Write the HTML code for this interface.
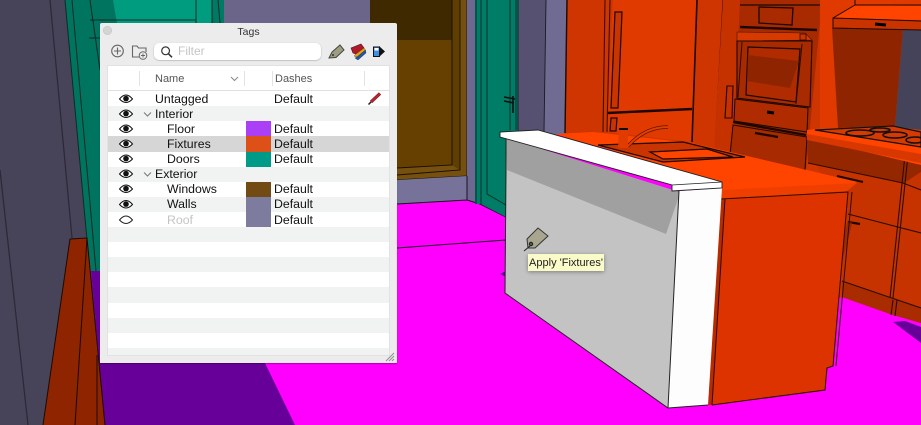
<!DOCTYPE html>
<html><head><meta charset="utf-8"><style>
html,body{margin:0;padding:0;background:#f0f}
#r{position:relative;width:921px;height:425px;overflow:hidden;filter:blur(.35px);font-family:"Liberation Sans",sans-serif}
#s{position:absolute;left:0;top:0}
#p{position:absolute;left:100px;top:23px;width:297px;height:340px;background:#ececec;box-shadow:0 1px 1px rgba(0,0,0,.3);border-radius:2px 2px 0 0}
.a{position:absolute}
#t{position:absolute;left:8px;top:43px;width:281px;height:289px;background:#f1f3f3;box-shadow:0 0 0 1px #e2e2e2}
.w{position:absolute;left:0;width:281px;height:15px;background:#fff}
.g{position:absolute;left:0;width:281px;height:15px;background:#f1f3f3}
.x{position:absolute;font-size:12.3px;line-height:15px;color:#111;white-space:nowrap;margin-top:1px}
.sw{position:absolute;left:138px;width:25px}
.sp{position:absolute;top:5px;width:1px;height:15px;background:#e3e3e3}
#tip{position:absolute;left:528px;top:254px;width:76px;height:17px;background:#fbfbc9;box-shadow:0 1px 4px rgba(0,0,0,.35);font-size:11px;line-height:18px;color:#222;text-align:center;white-space:nowrap}
</style></head><body><div id="r">
<svg id="s" width="921" height="425" viewBox="0 0 921 425">
<rect width="921" height="425" fill="#f0f"/>
<!-- left wall -->
<polygon points="0,0 66,0 105,425 0,425" fill="#474359"/>
<path d="M50 0L72 238M0 170L28 425" stroke="#2a2935" stroke-width="1.2" fill="none"/>
<!-- teal left -->
<polygon points="65,0 225,0 225,23 100,23 100,271 91,271 87,240" fill="#00745e"/>
<polygon points="100,0 212,0 212,23 117,23 113,0" fill="#009c80"/>
<polygon points="212,0 224,0 224,23 215,23" fill="#007a64"/>
<path d="M72 0L96 271M90 0L100 70M90 20H196M196 0V23M212 0V23M218 0L220 23M89 38H100M65 0L87 240" stroke="#0c2c28" stroke-width="1" fill="none"/>
<rect x="224" y="0" width="146" height="24" fill="#6a6589"/>
<rect x="370" y="0" width="30" height="24" fill="#3f2900"/>
<!-- purple shadow -->
<polygon points="91,271 300,271 265,363 295,425 105,425" fill="#660099"/>
<!-- red cabinet -->
<polygon points="70,239 87,238 105,425 43,425" fill="#8f2400"/>
<path d="M70 239L87 238L105 425M70 239L43 425M87 238L75 425M97 355V425" stroke="#1c0a00" stroke-width="1" fill="none"/>
<!-- brown door -->
<rect x="397" y="0" width="70" height="180" fill="#654000"/>
<rect x="397" y="0" width="55" height="40" fill="#3f2900"/>
<polygon points="452,0 467,0 467,176 397,180 397,168 452,165" fill="#76500f"/>
<polygon points="452,0 460,0 460,170 452,165" fill="#5f3e02"/>
<path d="M452 0V165L397 168M460 0V170L397 175M467 0V176L397 180" stroke="#1a1000" stroke-width=".9" fill="none"/>
<polygon points="397,180 467,176 467,200 397,204" fill="#76729a"/>
<polygon points="467,0 476,0 476,204 467,200" fill="#6d6890"/>
<path d="M397 204L467 200L480 204L506 217M397 248L506 240M467 176V200" stroke="#1a1220" stroke-width="1" fill="none"/>
<!-- teal door -->
<polygon points="475,0 519,0 519,140 506,140 506,217 481,204 475,204" fill="#007d67"/>
<path d="M476 0V204M481 0V204M487 0V194L506 205M510 0V130M516 0V130" stroke="#0b2d28" stroke-width="1" fill="none"/>
<path d="M504 97L515 99M504 101L514 103M513 96V113" stroke="#111" stroke-width="1.6" fill="none"/>
<polygon points="519,0 546,0 544,135 518,131" fill="#565170"/>
<polygon points="546,0 568,0 566,135 544,135" fill="#6f6b92"/>
<path d="M518 0V131M546 0L544 132" stroke="#1a1a22" stroke-width=".9" fill="none"/>
<!-- kitchen base -->
<polygon points="567,0 921,0 921,323 893,315 842,297 820,300 800,210 720,170 565,140" fill="#cf3500"/>
<polygon points="613,0 697,0 692,142 607,132" fill="#e03a00"/>
<path d="M567 0L565 133" stroke="#1c0800" stroke-width="1.400" fill="none"/>
<path d="M697 0L692 142" stroke="#1c0800" stroke-width="1.600" fill="none"/>
<path d="M607 113L692 109" stroke="#1c0800" stroke-width="2.400" fill="none"/>
<path d="M605 0L603 132M610 0L607 132M723 0L715 149" stroke="#3a1000" stroke-width="1.100" fill="none"/>
<polygon points="615,12 622,12 618,108 611,108" fill="#c93400" stroke="#1c0800" stroke-width="1.200"/>
<polygon points="611,118 617,118 616,131 610,131" fill="#c93400" stroke="#1c0800" stroke-width="1.200"/>
<!-- oven column -->
<polygon points="723,0 822,0 806,172 714,150" fill="#c53200"/>
<polygon points="740,0 822,0 806,168 733,150" fill="#a82a00"/>
<path d="M740 5H821" stroke="#1c0800" stroke-width="1.200"/>
<polygon points="759,7 793,8 792,25 759,23" fill="#a82a00" stroke="#1c0800" stroke-width="1.300"/>
<path d="M740 27L817 30" stroke="#1c0800" stroke-width="2.400"/>
<polygon points="737,32 805,33 812,40 737,41" fill="#d63a00" stroke="#4a1500" stroke-width=".6"/>
<rect x="800" y="34" width="6" height="6" fill="#c93400" stroke="#2b0c00" stroke-width=".8"/>
<polygon points="737,41 812,41 810,107 737,98" fill="#a82a00" stroke="#1c0800" stroke-width="1.100"/>
<polygon points="748,47 800,49 796,102 746,95" fill="#b02c00" stroke="#1c0800" stroke-width="1.200"/>
<polygon points="748,55 799,61 790,88 747,81" fill="#8f2500"/>
<path d="M742 42L738 97M802 44L796 104" stroke="#2b0c00" stroke-width="1" fill="none"/>
<polygon points="735,99 808,108 807,132 734,121" fill="#b02c00" stroke="#1c0800" stroke-width="1"/>
<path d="M767 112L774 113" stroke="#000" stroke-width="3"/>
<path d="M733 122L806 135" stroke="#1c0800" stroke-width="2.400"/>
<polygon points="733,125 807,137 805,170 730,155" fill="#a82a00" stroke="#1c0800" stroke-width="1"/>
<path d="M755 133L778 137" stroke="#1c0800" stroke-width="2.400"/>
<polygon points="727,86 733,86 732,118 725,118" fill="#c53200" stroke="#1c0800" stroke-width="1.100"/>
<!-- hood -->
<rect x="820" y="0" width="101" height="130" fill="#e03a00"/>
<polygon points="832,28 903,30 895,127 838,128" fill="#8f2500"/>
<polygon points="903,30 921,30 921,130 895,127" fill="#454359"/>
<polygon points="855,5 921,6 921,20 833,18" fill="#ff4400"/>
<polygon points="833,18 921,21 921,30 833,28" fill="#c83300"/>
<path d="M855 5L833 18V28L921 30M833 18L921 21M855 0V5H921" stroke="#1c0800" stroke-width="1" fill="none"/>
<path d="M875 24L886 25" stroke="#000" stroke-width="3"/>
<!-- lower cabinets -->
<polygon points="807,138 921,165 921,323 893,315 842,297 830,200" fill="#c73300"/>
<polygon points="807,137 921,150 921,172 904,183 808,163" fill="#952700"/>
<polygon points="842,281 893,299 921,308 921,323 893,315 842,297" fill="#a82c00"/>
<path d="M808 163L903 183L921 190M848 214L921 233M842 281L921 308M905 155L890 298M908 155L893 298M893 300L891 315M897 300L895 316" stroke="#2b0c00" stroke-width="1.100" fill="none"/>
<path d="M837 176L863 182" stroke="#1c0800" stroke-width="2"/>
<path d="M848 222L860 224" stroke="#1c0800" stroke-width="2.400"/>
<path d="M850 222L840 260" stroke="#8f2500" stroke-width="5" opacity=".7"/>
<!-- cooktop counter -->
<polygon points="807,130 815,129 893,126 921,132 921,165 807,138" fill="#ff4400"/>
<polygon points="807,134 921,154 921,163 807,140" fill="#d83800"/>
<polygon points="815,130 893,126 921,132 921,147" fill="#d63a00" stroke="#111" stroke-width="1.200"/>
<g fill="none" stroke="#111" stroke-width="1.600"><ellipse cx="860" cy="133" rx="14" ry="3"/><ellipse cx="880" cy="130" rx="10" ry="2"/><ellipse cx="895" cy="135" rx="12" ry="3"/><ellipse cx="915" cy="140" rx="9" ry="3"/></g>
<!-- floor shadow -->
<polygon points="893,322 905,321 921,327 921,343" fill="#660099"/>
<polygon points="500,274 506,271 506,277" fill="#660099"/>
<!-- countertop -->
<polygon points="555,134 593,132 692,143 807,170 857,182 847,191 721,199 722,182" fill="#ff4400"/>
<polygon points="721,190 857,183 847,191 721,199" fill="#ef3f00"/>
<polygon points="598,145 683,142 745,157 663,162" fill="#c93400" stroke="#1c0800" stroke-width="1.200"/>
<polygon points="650,152 707,149 733,157 663,159" fill="#ff4400" stroke="#1c0800" stroke-width="1.200"/>
<path d="M628 146Q645 127 668 127" stroke="#5a1800" stroke-width="3.400" fill="none"/>
<path d="M628 146Q645 127 668 127" stroke="#e63d00" stroke-width="2" fill="none"/>
<polygon points="619,128 628,130 628,148 618,148" fill="#e03c00"/>
<path d="M619 129H628" stroke="#111" stroke-width="2"/>
<!-- orange end -->
<polygon points="725,199 848,192 833,366 827,368 825,390 712,405" fill="#dd3300"/>
<polygon points="720,199 725,199 712,405 708,405" fill="#b82a00"/>
<path d="M721 199L848 192L833 366L827 368L825 390L712 405M725 199L712 405M852 192L836 366" stroke="#2b0c00" stroke-width="1" fill="none"/>
<!-- island side -->
<polygon points="506,138 679,192 668,408 505,293" fill="#c3c3c3"/>
<polygon points="506,138 679,192 679,196 666,234 507,170" fill="#a0a0a0"/>
<polygon points="679,191 722,188 708,405 668,408" fill="#fdfdfd"/>
<path d="M506 138V170L505 293L668 408L708 405M679 191L668 408" stroke="#222" stroke-width="1" fill="none"/>
<polygon points="500,132 538,130 722,182 722,188 672,191 672,185 500,137" fill="#fff" stroke="#222" stroke-width=".9"/>
<path d="M672 185L722 182" stroke="#222" stroke-width=".8"/>
<!-- tag cursor -->
<path d="M527 239L538 228L548 236L535 248H528Z" fill="#a8a68e" stroke="#333" stroke-width="1"/>
<circle cx="531" cy="244" r="1.800" fill="#555" stroke="#111" stroke-width=".8"/>
<path d="M530 246L524 251" stroke="#222" stroke-width="1"/>
</svg>

<div id="p">
<div class="a" style="left:3px;top:3px;width:9px;height:9px;border-radius:50%;background:#d4d4d4;box-shadow:inset 0 0 0 .5px #c4c4c4"></div>
<div class="a" style="left:0;width:297px;top:2px;text-align:center;font-size:10.5px;line-height:14px;color:#333">Tags</div>
<svg class="a" style="left:8px;top:18px" width="285" height="22" viewBox="108 41 285 22">
<circle cx="117.500" cy="51" r="5.800" fill="none" stroke="#666" stroke-width="1.100"/><path d="M114 51H121M117.500 47.500V54.500" stroke="#666" stroke-width="1.100"/>
<path d="M142 57H132.500V46H137L138.500 48H146V52" fill="none" stroke="#666" stroke-width="1.100"/>
<circle cx="143" cy="55.500" r="3.800" fill="#ececec" stroke="#666" stroke-width="1"/><path d="M141 55.500H145M143 53.500V57.500" stroke="#666" stroke-width=".9"/>
<path d="M329 58L332 52L340 45L344 50L336 57.500Z" fill="#9d9d80" stroke="#444" stroke-width="1"/>
<circle cx="333" cy="55" r="1" fill="#333"/>
<polygon points="351,48 361,44 364,48 356,54 353,53" fill="#b5172a" stroke="#3a1a1a" stroke-width=".6"/>
<polygon points="356,54 364,48 365.500,50 357,57 354,56" fill="#e8a20f" stroke="#4a3a10" stroke-width=".4"/>
<polygon points="357,57 365.500,50 366,53 358,60 355,58" fill="#2455a8" stroke="#1a2a4a" stroke-width=".4"/>
<rect x="373.500" y="47" width="6" height="9.500" fill="#3d8fe0" stroke="#111" stroke-width="1"/>
<rect x="374.500" y="48" width="4" height="2.500" fill="#fff"/>
<polygon points="379,46 385,51.500 379,57" fill="#111"/>
</svg>
<div class="a" style="left:54px;top:20px;width:167px;height:17px;background:#fff;border-radius:5px;box-shadow:0 .5px 1.500px rgba(0,0,0,.3)"></div>
<svg class="a" style="left:60px;top:22px" width="14" height="14" viewBox="0 0 14 14"><circle cx="5.600" cy="5.800" r="3.900" fill="none" stroke="#333" stroke-width="1.200"/><path d="M8.500 8.800L12 12.300" stroke="#333" stroke-width="1.500"/></svg>
<div class="a" style="left:78px;top:21px;font-size:12px;line-height:15px;color:#c4c4c4">Filter</div>

<div id="t">
<div class="w" style="top:0;height:24px"></div>
<div class="a" style="left:0;top:24px;width:281px;height:1px;background:#e0e0e0"></div>
<div class="sp" style="left:31px"></div><div class="sp" style="left:136px"></div><div class="sp" style="left:164px"></div><div class="sp" style="left:256px"></div>
<div class="x" style="left:47px;top:5px;font-size:11px;color:#555">Name</div>
<div class="x" style="left:167px;top:5px;font-size:11px;color:#555">Dashes</div>
<svg class="a" style="left:122px;top:10px" width="9" height="6"><path d="M1 1L4.500 4.500L8 1" fill="none" stroke="#888" stroke-width="1"/></svg>

<div class="w" style="top:25px;height:15px"></div>
<div class="g" style="top:40px"></div>
<div class="w" style="top:55px"></div>
<div class="a" style="left:0;top:70px;width:281px;height:16px;background:#d6d6d6"></div>
<div class="w" style="top:86px"></div>
<div class="g" style="top:101px"></div>
<div class="w" style="top:116px"></div>
<div class="g" style="top:131px"></div>
<div class="w" style="top:146px"></div>
<div class="w" style="top:176px"></div>
<div class="w" style="top:206px"></div>
<div class="w" style="top:237px"></div>
<div class="w" style="top:267px"></div>

<div class="sw" style="top:55px;height:15px;background:#aa3ff5"></div>
<div class="sw" style="top:70px;height:16px;background:#dd5018"></div>
<div class="sw" style="top:86px;height:15px;background:#009b88"></div>
<div class="sw" style="top:116px;height:15px;background:#724a14"></div>
<div class="sw" style="top:131px;height:30px;background:#7e7c9e"></div>

<div class="x" style="left:47px;top:25px">Untagged</div><div class="x" style="left:166px;top:25px">Default</div>
<div class="x" style="left:47px;top:40px">Interior</div>
<div class="x" style="left:59px;top:55px">Floor</div><div class="x" style="left:166px;top:55px">Default</div>
<div class="x" style="left:59px;top:70px">Fixtures</div><div class="x" style="left:166px;top:70px">Default</div>
<div class="x" style="left:59px;top:85px">Doors</div><div class="x" style="left:166px;top:85px">Default</div>
<div class="x" style="left:47px;top:100px">Exterior</div>
<div class="x" style="left:59px;top:115px">Windows</div><div class="x" style="left:166px;top:115px">Default</div>
<div class="x" style="left:59px;top:130px">Walls</div><div class="x" style="left:166px;top:130px">Default</div>
<div class="x" style="left:59px;top:146px;color:#c4c4c4">Roof</div><div class="x" style="left:166px;top:146px">Default</div>

<svg class="a" style="left:0;top:25px" width="281" height="140" viewBox="108 91 281 140">
<defs><g id="e"><path d="M-6.500 0Q0 -8 6.500 0Q0 7 -6.500 0Z" fill="#fff" stroke="#111" stroke-width="1"/><circle cx="0" cy="-.4" r="2.800" fill="#111"/></g></defs>
<use href="#e" x="126" y="99"/><use href="#e" x="126" y="114"/><use href="#e" x="126" y="129"/><use href="#e" x="126" y="144"/><use href="#e" x="126" y="159"/><use href="#e" x="126" y="174"/><use href="#e" x="126" y="189"/><use href="#e" x="126" y="204.500"/>
<path d="M119.500 220Q126 212 132.500 220Q126 227 119.500 220Z" fill="#fff" stroke="#222" stroke-width="1"/>
<path d="M144 112.500L147.500 116L151 112.500M144 172.500L147.500 176L151 172.500" fill="none" stroke="#777" stroke-width="1"/>
<path d="M371 102L380 93.500" stroke="#5a1a1a" stroke-width="3.200"/><path d="M371 102L380 93.500" stroke="#c5212e" stroke-width="2"/><path d="M368.500 104.500L371 102" stroke="#222" stroke-width="1.500"/>
</svg>
</div>
<svg class="a" style="left:285px;top:329px" width="10" height="10"><path d="M1 9L9 1M4 9L9 4M7 9L9 7" stroke="#8f8f8f" stroke-width="1"/></svg>
</div>
<div id="tip">Apply 'Fixtures'</div>
</div></body></html>
